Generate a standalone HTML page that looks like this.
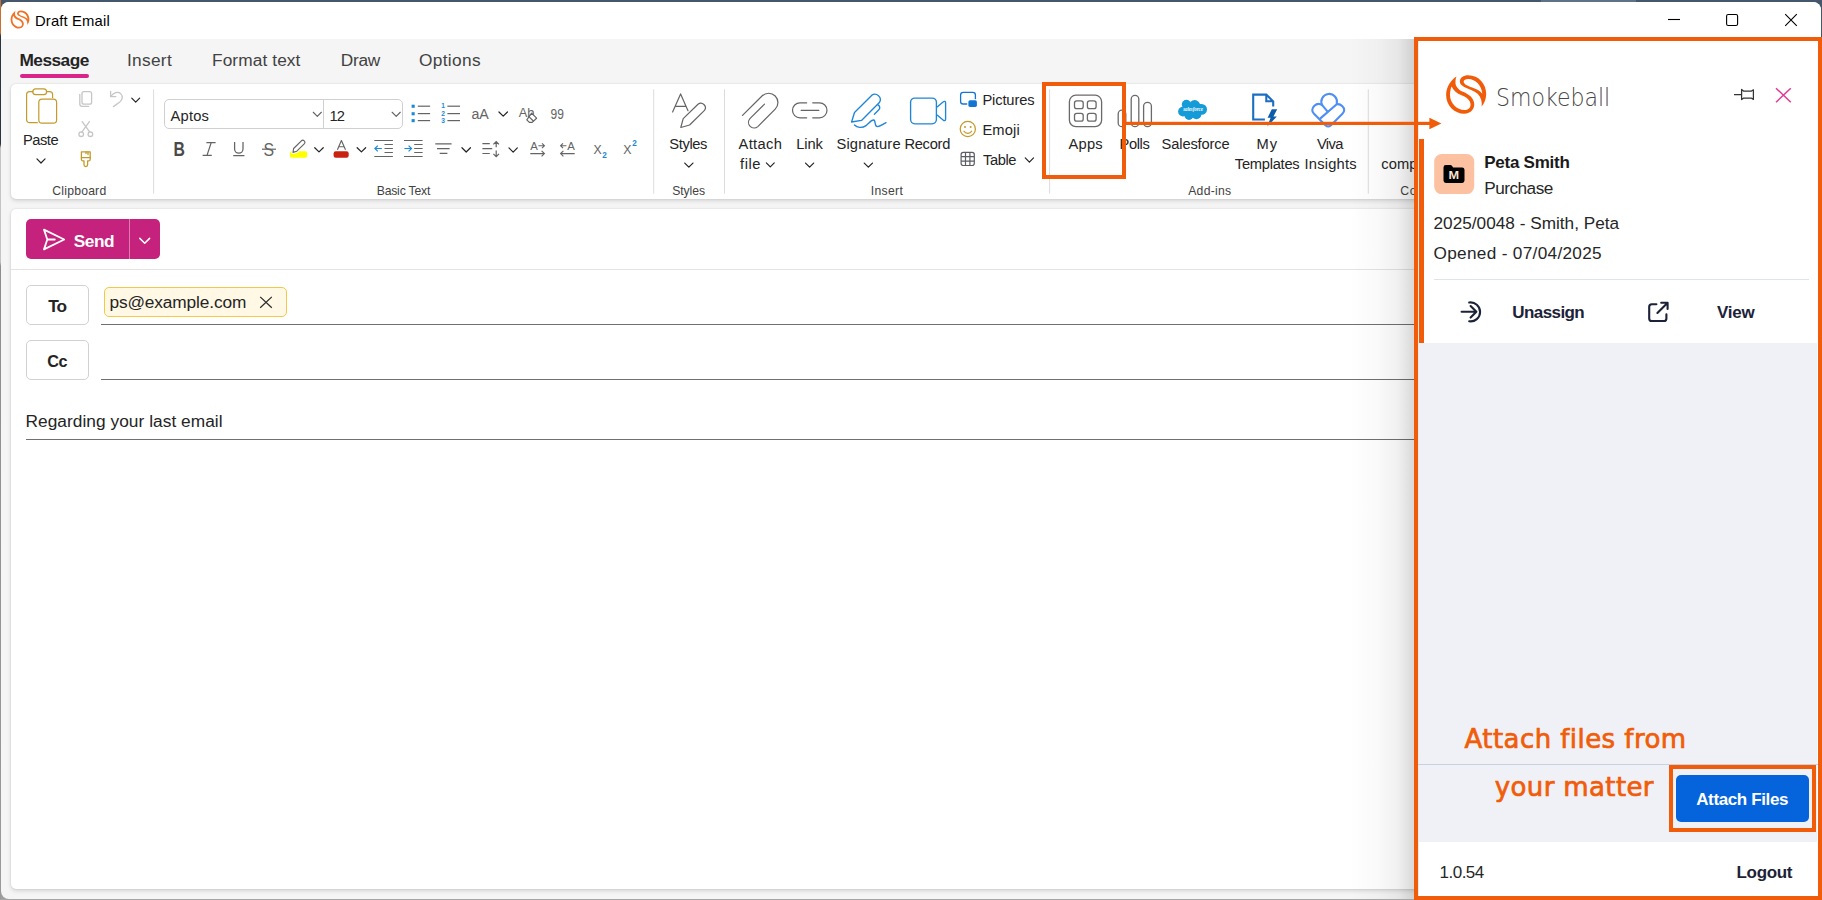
<!DOCTYPE html>
<html lang="en"><head><meta charset="utf-8"><title>Draft Email</title>
<style>
html,body{margin:0;padding:0}
body{width:1822px;height:900px;overflow:hidden;position:relative;background:linear-gradient(#44576d 0,#44576d 300px,#a0a0a0 600px);font-family:"Liberation Sans",sans-serif}
.abs,.t,svg.l{position:absolute}
.t{white-space:pre;display:block}
svg.l{left:0;top:0;width:1822px;height:900px;overflow:visible}
#edgeL{left:0;top:0;width:1px;height:900px;background:linear-gradient(#c9702f 0,#c9702f 33px,#2c3440 36px,#2c3440 144px,#c4c4c4 148px,#c4c4c4 262px,#8e8e8e 266px,#9a9a9a 100%)}
#win{left:1px;top:2px;width:1820px;height:897px;background:#f5f5f5;border-radius:8px;overflow:hidden}
#botline{left:0;top:899px;width:1414px;height:1px;background:#a6a6a6}
#title{left:0;top:0;width:1820px;height:37px;background:#fff}
#tabul{left:19px;top:72px;width:69px;height:4px;border-radius:2px;background:#d9258a}
#ribbon{left:10px;top:82px;width:1800px;height:115px;background:#fff;border-radius:5px;box-shadow:0 2px 4px rgba(0,0,0,.13),0 0 2px rgba(0,0,0,.13)}
#compose{left:10px;top:207px;width:1800px;height:680px;background:#fff;border-radius:5px;box-shadow:0 2px 4px rgba(0,0,0,.13),0 0 2px rgba(0,0,0,.13)}
#sendrow{left:10px;top:267px;width:1800px;height:1px;background:#e3e3e3}
#send{left:25px;top:217px;width:134px;height:40px;border-radius:5px;background:#c4227c}
#senddiv{left:128px;top:217px;width:1px;height:40px;background:#de7ab0}
.btn{border:1px solid #d1d1d1;border-radius:5px;background:#fff;box-sizing:border-box;width:63px;height:40px;left:25px}
#chip{left:103px;top:285px;width:183px;height:30px;box-sizing:border-box;border:1px solid #f3c84a;border-radius:5px;background:#fff8e5}
.ln{height:1px;background:#707070}
#pshadow{left:1350px;top:39px;width:64px;height:860px;background:linear-gradient(to right,rgba(0,0,0,0),rgba(0,0,0,.025) 45%,rgba(0,0,0,.06) 75%,rgba(0,0,0,.15))}
#panel{left:1414px;top:37px;width:408px;height:863px;box-sizing:border-box;border:4px solid #f05c0a;background:#fff}
#pgray{left:1419px;top:343px;width:398px;height:499px;background:#f0f1f6}
#cardbar{left:1419px;top:139px;width:5px;height:204px;background:#f05c0a}
#pdiv{left:1434px;top:279px;width:375px;height:1px;background:#dfe3ec}
#fdiv{left:1418px;top:764px;width:400px;height:1px;background:#c9d1e1}
#abox{left:1669px;top:765px;width:147px;height:67px;box-sizing:border-box;border:4px solid #f05c0a}
#abtn{left:1676px;top:775px;width:133px;height:47px;border-radius:5px;background:#0563dc}
#appsbox{left:1042px;top:82px;width:84px;height:97px;box-sizing:border-box;border:4px solid #f05c0a}
</style></head><body>
<div class="abs" id="edgeL"></div>
<div class="abs" style="left:1541px;top:0;width:95px;height:2px;background:#5e7187"></div>
<div class="abs" id="win">
<div class="abs" id="title"></div>
<div class="abs" id="tabul"></div>
<div class="abs" id="ribbon"></div>
<div class="abs" id="compose"></div>
<div class="abs" id="sendrow"></div>
<div class="abs" id="send"></div><div class="abs" id="senddiv"></div>
<div class="abs btn" style="top:283px"></div>
<div class="abs btn" style="top:338px"></div>
<div class="abs" id="chip"></div>
<div class="abs ln" style="left:100px;top:322px;width:1320px"></div>
<div class="abs ln" style="left:100px;top:377px;width:1320px"></div>
<div class="abs ln" style="left:25px;top:437px;width:1395px"></div>
</div>
<svg class="l" viewBox="0 0 1822 900">
<path transform="translate(10.6,10.4) scale(0.031438127090301006) translate(-150,-145)" d="M305,165 C230,210 150,320 150,440 C150,600 280,720 420,720 C520,720 570,650 570,580 C570,480 480,420 400,390 C330,365 285,300 290,250 C290,215 295,190 305,165 Z M232,312 C215,350 208,400 208,440 C208,560 310,665 425,665 C490,665 515,620 515,585 C515,520 450,470 380,445 C310,420 260,370 232,312 Z M480,145 C640,145 748,280 748,420 C748,500 720,565 680,610 C690,540 670,470 620,420 C570,375 480,350 420,320 C380,300 355,275 355,240 C355,180 410,145 480,145 Z M412,240 C412,215 440,200 480,200 C590,200 680,300 690,420 C660,380 600,350 540,330 C470,305 412,280 412,240 Z" fill="#ee7326" fill-rule="evenodd"/>
<path d="M1668,19.5 H1680" stroke="#000" stroke-width="1.1"/>
<rect x="1726.6" y="14.5" width="11" height="11" rx="1.6" fill="none" stroke="#000" stroke-width="1.1"/>
<path d="M1785.2,14.2 L1796.8,25.8 M1796.8,14.2 L1785.2,25.8" stroke="#000" stroke-width="1.1"/>
<path d="M44,229.6 L64.2,239.5 L44,249.4 L47.3,239.5 Z M47.3,239.5 H54.8" fill="none" stroke="#fff" stroke-width="1.8" stroke-linejoin="round" stroke-linecap="round"/>
<path d="M139.8,238.4 l4.9,4.9 l4.9,-4.9" fill="none" stroke="#fff" stroke-width="1.5" stroke-linecap="round" stroke-linejoin="round"/>
<path d="M260.2,296.9 L271.8,307.8 M271.8,296.9 L260.2,307.8" stroke="#2b2b2b" stroke-width="1.25"/>
<g fill="none" stroke="#c39a2b" stroke-width="1.2" stroke-linecap="round" stroke-linejoin="round"><path d="M37.3,122.7 H29.6 a3,3 0 0 1 -3,-3 V94.6 a3,3 0 0 1 3,-3 H32.8"/><path d="M46.6,91.6 H49.6 a3,3 0 0 1 3,3 V97.4"/><rect x="32.8" y="88.8" width="13.8" height="5.8" rx="2.9"/><rect x="38.8" y="99.2" width="17.8" height="24" rx="3.2"/></g>
<path d="M36.95,158.95 l4.05,4.05 l4.05,-4.05" fill="none" stroke="#242424" stroke-width="1.2" stroke-linecap="round" stroke-linejoin="round"/>
<g fill="none" stroke="#c6c6c6" stroke-width="1.3" stroke-linecap="round" stroke-linejoin="round"><rect x="82" y="91.6" width="9.6" height="12.6" rx="2"/><path d="M79.8,94.4 V104 a2.4,2.4 0 0 0 2.4,2.4 H88.6"/><path d="M110.6,91.4 V96.6 H115.8"/><path d="M110.8,96.4 C113.5,92.6 118,91.2 120.6,93.6 C123.2,96.2 122.6,99.8 119.8,102 L113.4,106.6"/><path d="M82.2,121.6 L89.8,132.2 M89.4,121.6 L81.8,132.2"/><circle cx="81.2" cy="134.2" r="2.3"/><circle cx="90.4" cy="134.2" r="2.3"/></g>
<path d="M131.75,98.15 l3.95,3.95 l3.95,-3.95" fill="none" stroke="#242424" stroke-width="1.2" stroke-linecap="round" stroke-linejoin="round"/>
<g fill="none" stroke="#c39a2b" stroke-width="1.3" stroke-linejoin="round" stroke-linecap="round"><path d="M81.4,151.8 H90.2 V159.4 a1.5,1.5 0 0 1 -1.5,1.5 H87.6 V164.8 a1.8,1.8 0 0 1 -3.6,0 V160.9 H82.9 a1.5,1.5 0 0 1 -1.5,-1.5 Z"/><path d="M81.4,157.6 H90.2 M88,152 V154.6 M86,152 V153.6"/></g>
<rect x="153.1" y="89.3" width="1" height="104.4" fill="#dcdcdc"/>
<rect x="653.2" y="89.3" width="1" height="104.4" fill="#dcdcdc"/>
<rect x="724.0" y="89.3" width="1" height="104.4" fill="#dcdcdc"/>
<rect x="1049.1" y="89.3" width="1" height="104.4" fill="#dcdcdc"/>
<rect x="1367.8" y="89.3" width="1" height="104.4" fill="#dcdcdc"/>
<rect x="164.5" y="99.5" width="238" height="29" rx="4.5" fill="#fff" stroke="#d0d0d0" stroke-width="1"/>
<rect x="323" y="100" width="1" height="28" fill="#d0d0d0"/>
<path d="M313.25,112.25 l4.05,4.05 l4.05,-4.05" fill="none" stroke="#616161" stroke-width="1.1" stroke-linecap="round" stroke-linejoin="round"/>
<path d="M392.15,112.25 l4.05,4.05 l4.05,-4.05" fill="none" stroke="#616161" stroke-width="1.1" stroke-linecap="round" stroke-linejoin="round"/>
<rect x="411.6" y="104.7" width="3.1" height="3.1" fill="#1b8ad6"/>
<rect x="411.6" y="112.2" width="3.1" height="3.1" fill="#1b8ad6"/>
<rect x="411.6" y="119.1" width="3.1" height="3.1" fill="#1b8ad6"/>
<rect x="417.8" y="105.60000000000001" width="12.3" height="1.2" fill="#646464"/>
<rect x="447.4" y="105.60000000000001" width="12.6" height="1.2" fill="#646464"/>
<rect x="417.8" y="113.0" width="12.3" height="1.2" fill="#646464"/>
<rect x="447.4" y="113.0" width="12.6" height="1.2" fill="#646464"/>
<rect x="417.8" y="120.0" width="12.3" height="1.2" fill="#646464"/>
<rect x="447.4" y="120.0" width="12.6" height="1.2" fill="#646464"/>
<text x="441.3" y="108.4" font-family="Liberation Sans, sans-serif" font-size="6.6" font-weight="700" fill="#1b8ad6">1</text>
<text x="441.3" y="115.6" font-family="Liberation Sans, sans-serif" font-size="6.6" font-weight="700" fill="#1b8ad6">2</text>
<text x="441.3" y="122.6" font-family="Liberation Sans, sans-serif" font-size="6.6" font-weight="700" fill="#1b8ad6">3</text>
<text x="471.4" y="118.8" font-family="Liberation Sans, sans-serif" font-size="15.4" fill="#646464" textLength="17.4" lengthAdjust="spacingAndGlyphs">aA</text>
<path d="M498.95,111.95 l4.25,4.15 l4.25,-4.15" fill="none" stroke="#242424" stroke-width="1.2" stroke-linecap="round" stroke-linejoin="round"/>
<text x="518.8" y="116.6" font-family="Liberation Sans, sans-serif" font-size="13.6" fill="#646464" textLength="15.6" lengthAdjust="spacingAndGlyphs">Ab</text>
<g stroke="#646464" stroke-width="1.2" fill="#fff" stroke-linejoin="round"><path d="M531.6,113.2 L536.6,118.2 L532.2,122.4 H529.4 L526.8,119.8 Z"/><path d="M528.6,116.4 L533.6,121.2" fill="none"/></g>
<text x="550.6" y="119.1" font-family="Liberation Sans, sans-serif" font-size="15.4" fill="#646464" textLength="13.4" lengthAdjust="spacingAndGlyphs">99</text>
<text x="173.4" y="155.9" font-family="Liberation Sans, sans-serif" font-size="19.4" font-weight="700" fill="#4a4a4a" textLength="11.4" lengthAdjust="spacingAndGlyphs">B</text>
<path d="M206.4,142.6 H215.6 M202.6,155.4 H211.8 M211.2,142.6 L207,155.4" stroke="#646464" stroke-width="1.25" fill="none"/>
<path d="M234.6,142 V149 a4.2,4.2 0 0 0 8.4,0 V142 M233.2,155.6 H244.4" stroke="#646464" stroke-width="1.25" fill="none"/>
<text x="263.6" y="155.6" font-family="Liberation Sans, sans-serif" font-size="18.6" fill="#646464" textLength="10.6" lengthAdjust="spacingAndGlyphs">S</text>
<rect x="262" y="148.6" width="14" height="1.2" fill="#646464"/>
<rect x="289.9" y="151.3" width="17.3" height="6.5" rx="2" fill="#ffff00"/>
<path d="M301.4,140.8 L293.6,148.5 L293,152.4 L296.8,151.2 L304.5,143.6 A2.1,2.1 0 0 0 301.4,140.8 Z" stroke="#fff" stroke-width="3.4" fill="#fff" stroke-linejoin="round"/>
<path d="M301.4,140.8 L293.6,148.5 L293,152.4 L296.8,151.2 L304.5,143.6 A2.1,2.1 0 0 0 301.4,140.8 Z" stroke="#646464" stroke-width="1.15" fill="#fff" stroke-linejoin="round"/>
<path d="M314.75,147.75 l4.25,4.15 l4.25,-4.15" fill="none" stroke="#242424" stroke-width="1.2" stroke-linecap="round" stroke-linejoin="round"/>
<rect x="333.6" y="151.2" width="15.1" height="6.5" rx="2.2" fill="#c8230f"/>
<path d="M337.4,149.8 L341.4,140.5 L345.5,149.8 M338.8,146.7 H344.1" stroke="#646464" stroke-width="1.15" fill="none" stroke-linejoin="round"/>
<path d="M357.15,147.75 l4.25,4.15 l4.25,-4.15" fill="none" stroke="#242424" stroke-width="1.2" stroke-linecap="round" stroke-linejoin="round"/>
<g stroke="#646464" stroke-width="1.1" fill="none"><path d="M374.3,140.5 h18.6 M374.3,156.5 h18.6 M384.5,144.5 h8.4 M384.5,148.5 h8.4 M384.5,152.5 h8.4"/></g><path d="M374.90000000000003,148.5 h7 M377.8,145.6 l-2.9,2.9 l2.9,2.9" stroke="#1b8ad6" stroke-width="1.2" fill="none"/>
<g stroke="#646464" stroke-width="1.1" fill="none"><path d="M404,140.5 h18.6 M404,156.5 h18.6 M414.2,144.5 h8.4 M414.2,148.5 h8.4 M414.2,152.5 h8.4"/></g><path d="M404.4,148.5 h7 M408.6,145.6 l2.9,2.9 l-2.9,2.9" stroke="#1b8ad6" stroke-width="1.2" fill="none"/>
<path d="M435.3,143.9 H451.6 M437,148.7 H449.6 M439.7,153.4 H447.4" stroke="#646464" stroke-width="1.2" fill="none"/>
<path d="M461.95,147.75 l4.25,4.25 l4.25,-4.25" fill="none" stroke="#242424" stroke-width="1.2" stroke-linecap="round" stroke-linejoin="round"/>
<path d="M482.4,143.6 H489.8 M482.4,148.6 H492.2 M482.4,153.5 H489.8 M496.2,141.8 V147.2 M493.4,144.4 L496.2,141.6 L499,144.4 M496.2,150.4 V156.4 M493.4,153.8 L496.2,156.6 L499,153.8" stroke="#646464" stroke-width="1.2" fill="none"/>
<path d="M508.95,147.85 l4.20,4.25 l4.20,-4.25" fill="none" stroke="#242424" stroke-width="1.2" stroke-linecap="round" stroke-linejoin="round"/>
<text x="530.2" y="150.4" font-family="Liberation Sans, sans-serif" font-size="11.4" fill="#646464" textLength="7.6" lengthAdjust="spacingAndGlyphs">A</text>
<path d="M538.4,145.7 H544.4 M542,143.3 l2.4,2.4 l-2.4,2.4 M530.3,153.6 H544.4 M541.6,150.8 l2.8,2.8 l-2.8,2.8" stroke="#646464" stroke-width="1.15" fill="none"/>
<text x="567.2" y="150.4" font-family="Liberation Sans, sans-serif" font-size="11.4" fill="#646464" textLength="7.6" lengthAdjust="spacingAndGlyphs">A</text>
<path d="M560.6,145.7 H566.4 M563,143.3 l-2.4,2.4 l2.4,2.4 M560.6,153.6 H574.7 M563.4,150.8 l-2.8,2.8 l2.8,2.8" stroke="#646464" stroke-width="1.15" fill="none"/>
<text x="593.6" y="153.8" font-family="Liberation Sans, sans-serif" font-size="12" fill="#646464" textLength="8.2" lengthAdjust="spacingAndGlyphs">X</text>
<text x="602.2" y="157.7" font-family="Liberation Sans, sans-serif" font-size="8.2" font-weight="700" fill="#1b8ad6">2</text>
<text x="623.2" y="153.8" font-family="Liberation Sans, sans-serif" font-size="12" fill="#646464" textLength="8.2" lengthAdjust="spacingAndGlyphs">X</text>
<text x="632.3" y="145.9" font-family="Liberation Sans, sans-serif" font-size="8.2" font-weight="700" fill="#1b8ad6">2</text>
<g fill="none" stroke="#646464" stroke-width="1.2" stroke-linecap="round" stroke-linejoin="round"><path d="M672.6,111.9 L680.6,93.9 L688,110.7 M675.4,106.3 H685.8"/><path d="M698,104.3 L683.2,118.6 L680.8,127.5 L689.6,125 L704.5,110.4 A4.5,4.5 0 0 0 698,104.3 Z" fill="#fff"/></g>
<path d="M684.75,163.05 l4.10,4.15 l4.10,-4.15" fill="none" stroke="#242424" stroke-width="1.2" stroke-linecap="round" stroke-linejoin="round"/>
<path fill="none" stroke="#646464" stroke-width="1.2" stroke-linecap="round" stroke-linejoin="round" d="M742.5,115.4 L762,96 A9.3,9.3 0 0 1 775.2,109.2 L757.8,126.6 A5.6,5.6 0 0 1 749.9,118.7 L764.5,104.1"/>
<path d="M766.35,162.85 l3.95,4.05 l3.95,-4.05" fill="none" stroke="#242424" stroke-width="1.2" stroke-linecap="round" stroke-linejoin="round"/>
<path fill="none" stroke="#646464" stroke-width="1.2" stroke-linecap="round" stroke-linejoin="round" d="M806.7,102.8 H800 A7.5,7.5 0 0 0 800,117.8 H806.7 M812.7,102.8 H819.5 A7.5,7.5 0 0 1 819.5,117.8 H812.7 M801.1,110.3 H818.9"/>
<path d="M805.55,163.05 l4.05,4.15 l4.05,-4.15" fill="none" stroke="#242424" stroke-width="1.2" stroke-linecap="round" stroke-linejoin="round"/>
<g fill="none" stroke="#1e86d6" stroke-width="1.35" stroke-linecap="round" stroke-linejoin="round"><path d="M871.6,95.4 L854.5,112.5 L851.6,122 L861.5,120.4 L879.4,102.6 A5.4,5.4 0 0 0 871.6,95.4 Z"/><path d="M877.6,104.6 C880.4,106 880.2,108.4 878.6,110 L874.4,114.2"/><path d="M854.5,125 C857,127.6 862,128.6 866,125.6 C869,123.4 871,119.8 873.6,120 C876.4,120.4 873.6,126.6 877.6,126.6 C880,126.6 883,124 886,122.6"/></g>
<path d="M864.25,163.05 l4.10,4.15 l4.10,-4.15" fill="none" stroke="#242424" stroke-width="1.2" stroke-linecap="round" stroke-linejoin="round"/>
<g fill="none" stroke="#1e86d6" stroke-width="1.35" stroke-linecap="round" stroke-linejoin="round"><rect x="910.6" y="98.1" width="25.8" height="25.7" rx="4.2"/><path d="M937.4,106.8 L943.4,101.7 A1.3,1.3 0 0 1 945.6,102.7 V119.3 A1.3,1.3 0 0 1 943.4,120.3 L937.4,115.2"/></g>
<rect x="960.6" y="92.4" width="14.8" height="11.6" rx="2.6" fill="none" stroke="#1474d2" stroke-width="1.3"/>
<rect x="967.2" y="99.2" width="10.6" height="8.6" fill="#fff"/>
<rect x="968.4" y="100.3" width="8.5" height="6.6" rx="1.6" fill="#1474d2"/>
<g fill="none" stroke="#c39a2b" stroke-width="1.25" stroke-linecap="round"><circle cx="967.8" cy="129" r="7.6"/><path d="M964,131.2 C965.6,134 970,134 971.6,131.2"/></g><circle cx="965" cy="127" r="1" fill="#c39a2b"/><circle cx="970.6" cy="127" r="1" fill="#c39a2b"/>
<g fill="none" stroke="#5c5c66" stroke-width="1.2"><rect x="961.1" y="152.3" width="13.2" height="13.2" rx="2.2"/><path d="M965.5,152.3 V165.5 M969.9,152.3 V165.5 M961.1,156.7 H974.3 M961.1,161.1 H974.3"/></g>
<path d="M1025.25,157.95 l4.15,4.25 l4.15,-4.25" fill="none" stroke="#242424" stroke-width="1.2" stroke-linecap="round" stroke-linejoin="round"/>
<g fill="none" stroke="#6a6a6a" stroke-width="1.3"><rect x="1069.4" y="95.2" width="32.2" height="31.5" rx="6.5"/><rect x="1074.5" y="100.8" width="8.7" height="7.9" rx="2.2"/><rect x="1087.4" y="100.8" width="8.7" height="7.9" rx="2.2"/><rect x="1074.5" y="113.3" width="8.7" height="7.9" rx="2.2"/><rect x="1087.4" y="113.3" width="8.7" height="7.9" rx="2.2"/></g>
<g fill="none" stroke="#6a6a6a" stroke-width="1.3"><rect x="1118.2" y="110.2" width="7.6" height="16.5" rx="3.8"/><rect x="1131.2" y="95.4" width="7.6" height="31.3" rx="3.8"/><rect x="1143.6" y="102.4" width="7.8" height="24.3" rx="3.9"/></g>
<g fill="#159bd7"><circle cx="1186.4" cy="104.4" r="4.6"/><circle cx="1194.6" cy="105.6" r="5.6"/><circle cx="1201.6" cy="109.4" r="5.4"/><circle cx="1183" cy="111.6" r="4.9"/><circle cx="1189" cy="115.4" r="4.5"/><circle cx="1196.4" cy="114.2" r="5"/><rect x="1184" y="104" width="17" height="11"/></g>
<text x="1183.2" y="111.4" font-family="Liberation Serif, serif" font-style="italic" font-weight="700" font-size="5.6" fill="#fff" textLength="19.6" lengthAdjust="spacingAndGlyphs">salesforce</text>
<path d="M1264.9,119.5 H1253.2 V94.6 H1266.3 L1273.2,101.5 V106.6 M1266.3,94.6 V101.3 H1273.2" fill="none" stroke="#1b6ec2" stroke-width="2.1" stroke-linejoin="miter"/>
<polygon points="1271.8,109.2 1277.2,109.2 1273.4,116.5 1276.8,116.5 1267.3,126.6 1270.6,117.8 1267.6,117.8" fill="#0b5cab"/>
<g fill="none" stroke="#4f8ef5" stroke-width="2.1" stroke-linecap="round" stroke-linejoin="round"><path d="M1322.2,105.2 C1319.8,103.4 1316.6,103.6 1314.4,105.8 C1311.6,108.6 1311.6,111.4 1314,113.8 L1325.4,125.2 C1327.2,126.8 1329.2,126.8 1331,125.2 L1342.4,113.8 C1344.8,111.4 1344.8,108.6 1342.4,106.2 C1340.8,104.6 1339,104 1337.2,104.2"/><path d="M1327.4,111.4 L1322.2,105.2 A7.8,7.8 0 1 1 1336.8,103.4"/><path d="M1337,104 L1320.4,118.4"/></g>
</svg>
<div id="utexts">
<span class="t" style="left:35.00px;top:10.87px;font:400 14.8px/20px 'Liberation Sans', sans-serif;color:#000;letter-spacing:0.15px">Draft Email</span>
<span class="t" style="left:19.50px;top:50.21px;font:700 17.3px/20px 'Liberation Sans', sans-serif;color:#242424;letter-spacing:-0.533px">Message</span>
<span class="t" style="left:127.00px;top:50.21px;font:400 17.3px/20px 'Liberation Sans', sans-serif;color:#424242;letter-spacing:0.3px">Insert</span>
<span class="t" style="left:212.00px;top:50.21px;font:400 17.3px/20px 'Liberation Sans', sans-serif;color:#424242;letter-spacing:0.1px">Format text</span>
<span class="t" style="left:340.80px;top:50.21px;font:400 17.3px/20px 'Liberation Sans', sans-serif;color:#424242;letter-spacing:-0.267px">Draw</span>
<span class="t" style="left:419.00px;top:50.21px;font:400 17.3px/20px 'Liberation Sans', sans-serif;color:#424242;letter-spacing:0.333px">Options</span>
<span class="t" style="left:23.00px;top:129.71px;font:400 14.7px/20px 'Liberation Sans', sans-serif;color:#242424;letter-spacing:-0.5px">Paste</span>
<span class="t" style="left:669.30px;top:133.71px;font:400 14.7px/20px 'Liberation Sans', sans-serif;color:#242424;letter-spacing:-0.38px">Styles</span>
<span class="t" style="left:738.60px;top:133.71px;font:400 14.7px/20px 'Liberation Sans', sans-serif;color:#242424;letter-spacing:0.32px">Attach</span>
<span class="t" style="left:740.00px;top:153.71px;font:400 14.7px/20px 'Liberation Sans', sans-serif;color:#242424;letter-spacing:0.567px">file</span>
<span class="t" style="left:796.20px;top:133.71px;font:400 14.7px/20px 'Liberation Sans', sans-serif;color:#242424;letter-spacing:-0.067px">Link</span>
<span class="t" style="left:836.50px;top:133.71px;font:400 14.7px/20px 'Liberation Sans', sans-serif;color:#242424;letter-spacing:0.15px">Signature</span>
<span class="t" style="left:904.40px;top:133.71px;font:400 14.7px/20px 'Liberation Sans', sans-serif;color:#242424;letter-spacing:-0.28px">Record</span>
<span class="t" style="left:982.40px;top:89.61px;font:400 14.7px/20px 'Liberation Sans', sans-serif;color:#242424;letter-spacing:-0.129px">Pictures</span>
<span class="t" style="left:982.40px;top:119.71px;font:400 14.7px/20px 'Liberation Sans', sans-serif;color:#242424;letter-spacing:0.15px">Emoji</span>
<span class="t" style="left:983.00px;top:149.71px;font:400 14.7px/20px 'Liberation Sans', sans-serif;color:#242424;letter-spacing:-0.4px">Table</span>
<span class="t" style="left:1068.60px;top:133.71px;font:400 14.7px/20px 'Liberation Sans', sans-serif;color:#242424;letter-spacing:0.2px">Apps</span>
<span class="t" style="left:1119.50px;top:133.71px;font:400 14.7px/20px 'Liberation Sans', sans-serif;color:#242424;letter-spacing:-0.375px">Polls</span>
<span class="t" style="left:1161.60px;top:133.71px;font:400 14.7px/20px 'Liberation Sans', sans-serif;color:#242424;letter-spacing:-0.144px">Salesforce</span>
<span class="t" style="left:1256.40px;top:133.71px;font:400 14.7px/20px 'Liberation Sans', sans-serif;color:#242424;letter-spacing:1.0px">My</span>
<span class="t" style="left:1234.80px;top:153.71px;font:400 14.7px/20px 'Liberation Sans', sans-serif;color:#242424;letter-spacing:-0.262px">Templates</span>
<span class="t" style="left:1317.00px;top:133.71px;font:400 14.7px/20px 'Liberation Sans', sans-serif;color:#242424;letter-spacing:-0.667px">Viva</span>
<span class="t" style="left:1304.60px;top:153.71px;font:400 14.7px/20px 'Liberation Sans', sans-serif;color:#242424;letter-spacing:0.2px">Insights</span>
<span class="t" style="left:1381.20px;top:153.71px;font:400 14.7px/20px 'Liberation Sans', sans-serif;color:#242424;letter-spacing:0.1px">comp</span>
<span class="t" style="left:1400.20px;top:180.57px;font:400 12.2px/20px 'Liberation Sans', sans-serif;color:#424242;letter-spacing:0.8px">Co</span>
<span class="t" style="left:52.30px;top:180.57px;font:400 12.2px/20px 'Liberation Sans', sans-serif;color:#424242;letter-spacing:0.213px">Clipboard</span>
<span class="t" style="left:376.70px;top:180.57px;font:400 12.2px/20px 'Liberation Sans', sans-serif;color:#424242;letter-spacing:-0.189px">Basic Text</span>
<span class="t" style="left:672.30px;top:180.57px;font:400 12.2px/20px 'Liberation Sans', sans-serif;color:#424242;letter-spacing:-0.1px">Styles</span>
<span class="t" style="left:870.80px;top:180.57px;font:400 12.2px/20px 'Liberation Sans', sans-serif;color:#424242;letter-spacing:0.32px">Insert</span>
<span class="t" style="left:1188.20px;top:180.57px;font:400 12.2px/20px 'Liberation Sans', sans-serif;color:#424242;letter-spacing:0.267px">Add-ins</span>
<span class="t" style="left:170.60px;top:105.61px;font:400 14.7px/20px 'Liberation Sans', sans-serif;color:#242424;letter-spacing:0.175px">Aptos</span>
<span class="t" style="left:329.60px;top:105.61px;font:400 14.7px/20px 'Liberation Sans', sans-serif;color:#242424;letter-spacing:-0.9px">12</span>
<span class="t" style="left:73.70px;top:231.01px;font:700 17.3px/20px 'Liberation Sans', sans-serif;color:#fff;letter-spacing:-0.433px">Send</span>
<span class="t" style="left:48.20px;top:295.61px;font:700 17.3px/20px 'Liberation Sans', sans-serif;color:#242424;letter-spacing:-0.9px">To</span>
<span class="t" style="left:109.40px;top:291.91px;font:400 17.3px/20px 'Liberation Sans', sans-serif;color:#242424;letter-spacing:-0.123px">ps@example.com</span>
<span class="t" style="left:47.20px;top:351.39px;font:700 16.2px/20px 'Liberation Sans', sans-serif;color:#242424;letter-spacing:-0.4px">Cc</span>
<span class="t" style="left:25.50px;top:411.01px;font:400 17.3px/20px 'Liberation Sans', sans-serif;color:#242424;letter-spacing:0.046px">Regarding your last email</span>
</div>
<div class="abs" id="appsbox"></div>
<div class="abs" id="pshadow"></div>
<div class="abs" id="panel"></div>
<div class="abs" style="left:1418px;top:41px;width:1px;height:855px;background:#ededed"></div>
<div class="abs" id="pgray"></div>
<div class="abs" id="cardbar"></div>
<div class="abs" id="pdiv"></div>
<div class="abs" id="fdiv"></div>
<div class="abs" id="abox"></div>
<div class="abs" id="abtn"></div>
<svg class="l" viewBox="0 0 1822 900">
<rect x="1125" y="121.8" width="306" height="3.2" fill="#f05c0a"/><polygon points="1429.4,117.8 1441.4,123.5 1429.4,129.3" fill="#f05c0a"/>
<path transform="translate(1446.1,75.2) scale(0.06705685618729097) translate(-150,-145)" d="M305,165 C230,210 150,320 150,440 C150,600 280,720 420,720 C520,720 570,650 570,580 C570,480 480,420 400,390 C330,365 285,300 290,250 C290,215 295,190 305,165 Z M232,312 C215,350 208,400 208,440 C208,560 310,665 425,665 C490,665 515,620 515,585 C515,520 450,470 380,445 C310,420 260,370 232,312 Z M480,145 C640,145 748,280 748,420 C748,500 720,565 680,610 C690,540 670,470 620,420 C570,375 480,350 420,320 C380,300 355,275 355,240 C355,180 410,145 480,145 Z M412,240 C412,215 440,200 480,200 C590,200 680,300 690,420 C660,380 600,350 540,330 C470,305 412,280 412,240 Z" fill="#f05c0a" fill-rule="evenodd"/>
<path d="M1734,94.5 H1741.6 M1741.6,89.4 V99.6 L1743.8,98 H1751.2 L1753.4,99.4 V89.8 L1751.2,91.2 H1743.8 Z" fill="none" stroke="#333" stroke-width="1.25" stroke-linejoin="round"/>
<path d="M1776,88.2 L1790.8,102.2 M1790.8,88.2 L1776,102.2" stroke="#e23a92" stroke-width="1.5"/>
<rect x="1434.2" y="154.1" width="40" height="40" rx="7.5" fill="#fbc1a1"/>
<path d="M1443.5,167.4 a2.4,2.4 0 0 1 2.4,-2.4 h4.2 a2.4,2.4 0 0 1 2,1 l1,1.4 h9 a2.4,2.4 0 0 1 2.4,2.4 v10.8 a2.4,2.4 0 0 1 -2.4,2.4 h-16.2 a2.4,2.4 0 0 1 -2.4,-2.4 Z" fill="#000"/>
<text x="1448.6" y="179.1" font-family="Liberation Sans, sans-serif" font-size="10.8" font-weight="700" fill="#fde3d4" textLength="10.6" lengthAdjust="spacingAndGlyphs">M</text>
<g fill="none" stroke="#1c2237" stroke-width="2.1" stroke-linecap="round" stroke-linejoin="round"><path d="M1461.6,311.8 H1476 M1470.6,306 L1476.4,311.8 L1470.6,317.6"/><path d="M1469.2,302.5 A9.5,9.5 0 1 1 1469.2,321.3"/></g>
<g fill="none" stroke="#1c2237" stroke-width="2.1" stroke-linecap="round" stroke-linejoin="round"><path d="M1656.4,304.2 H1651.8 a2.6,2.6 0 0 0 -2.6,2.6 V318.4 a2.6,2.6 0 0 0 2.6,2.6 H1663.8 a2.6,2.6 0 0 0 2.6,-2.6 V314.2"/><path d="M1657.4,313 L1667.4,303 M1661.2,302.8 H1667.6 V309"/></g>
</svg>
<div id="ptexts">
<span class="t" style="left:1495.66px;top:87.10px;font:200 25.4px/20px 'DejaVu Sans Light', 'DejaVu Sans', 'Liberation Sans', sans-serif;color:#484848;letter-spacing:0px;transform:scaleX(0.8677);transform-origin:0 0">Smokeball</span>
<span class="t" style="left:1484.20px;top:153.21px;font:700 17px/20px 'Liberation Sans', sans-serif;color:#1a1a1a;letter-spacing:-0.244px">Peta Smith</span>
<span class="t" style="left:1484.20px;top:177.54px;font:400 17.2px/20px 'Liberation Sans', sans-serif;color:#262626;letter-spacing:-0.5px">Purchase</span>
<span class="t" style="left:1433.50px;top:212.84px;font:400 17.2px/20px 'Liberation Sans', sans-serif;color:#262626;letter-spacing:0.014px">2025/0048 - Smith, Peta</span>
<span class="t" style="left:1433.50px;top:242.74px;font:400 17.2px/20px 'Liberation Sans', sans-serif;color:#262626;letter-spacing:0.317px">Opened - 07/04/2025</span>
<span class="t" style="left:1512.30px;top:302.81px;font:700 17px/20px 'Liberation Sans', sans-serif;color:#1c2237;letter-spacing:-0.586px">Unassign</span>
<span class="t" style="left:1717.00px;top:303.21px;font:700 17px/20px 'Liberation Sans', sans-serif;color:#1c2237;letter-spacing:-0.233px">View</span>
<span class="t" style="left:1464.50px;top:729.20px;font:400 26px/20px 'DejaVu Sans', 'Liberation Sans', sans-serif;color:#f05c0a;letter-spacing:0.438px;-webkit-text-stroke:0.7px #f05c0a">Attach files from</span>
<span class="t" style="left:1494.80px;top:777.30px;font:400 26px/20px 'DejaVu Sans', 'Liberation Sans', sans-serif;color:#f05c0a;letter-spacing:0.37px;-webkit-text-stroke:0.7px #f05c0a">your matter</span>
<span class="t" style="left:1696.20px;top:790.21px;font:700 17px/20px 'Liberation Sans', sans-serif;color:#fff;letter-spacing:-0.373px">Attach Files</span>
<span class="t" style="left:1439.50px;top:862.51px;font:400 17px/20px 'Liberation Sans', sans-serif;color:#262626;letter-spacing:-0.5px">1.0.54</span>
<span class="t" style="left:1736.50px;top:862.51px;font:700 17px/20px 'Liberation Sans', sans-serif;color:#1c2237;letter-spacing:-0.32px">Logout</span>
</div>
<div class="abs" id="botline"></div>
</body></html>
